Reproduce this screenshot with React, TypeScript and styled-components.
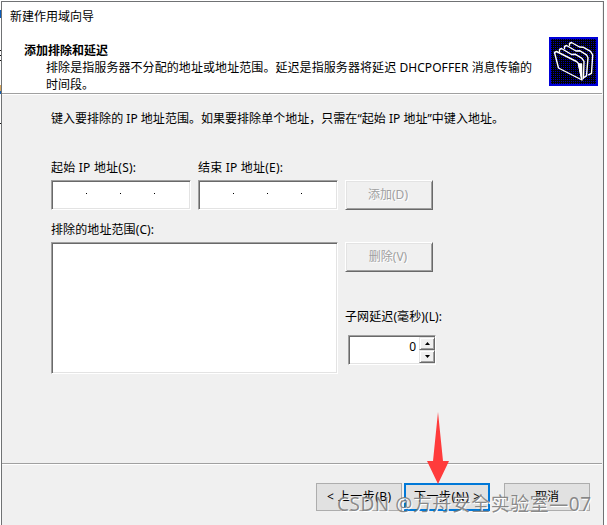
import React from "react";
import styled, { createGlobalStyle, css } from "styled-components";

const Global = createGlobalStyle`
  body { margin: 0; background: #fff; }
  * { box-sizing: border-box; }
  #root { height: 525px; overflow: hidden; }
`;

const Desktop = styled.main`
  position: relative;
  width: 607px;
  height: 525px;
  overflow: hidden;
  background: #fff;
  color: #000;
  font: 12px/17px "Noto Sans", "Noto Sans CJK SC", sans-serif;
  white-space: nowrap;
`;

const Behind = styled.svg`
  position: absolute;
  left: 0;
  top: 0;
`;

const Dialog = styled.section`
  width: 603px;
  height: 524px;
  margin: 1px 0 0 1px;
  border: 1px solid #707274;
  border-bottom: 0;
  background: #f0f0f0;
  display: flex;
  flex-direction: column;
`;

const Header = styled.header`
  flex: none;
  height: 92px;
  background: #fff;
  border-bottom: 1px solid #a0a0a0;
  display: flex;
  justify-content: space-between;
  padding: 6px 4px 0 8px;
  margin-right: 1px;
`;

const HeaderText = styled.div`
  display: flex;
  flex-direction: column;
`;

const Line = styled.div<{ $indent?: number; $top?: number }>`
  height: 17px;
  margin-left: ${(p) => p.$indent ?? 0}px;
  margin-top: ${(p) => p.$top ?? 0}px;
`;

const Fit = styled.svg`
  display: block;
  overflow: visible;
`;

const FolderIcon = styled.svg`
  margin-top: 29px;
  display: block;
`;

const Body = styled.div`
  height: 369px;
  border-top: 1px solid #fff;
  padding: 15px 0 0 49px;
`;

const Fields = styled.div`
  display: grid;
  grid-template-columns: 140px 140px 97px;
  column-gap: 7px;
  margin-top: 32px;
`;

const Label = styled.label`
  display: block;
  height: 21px;
`;

const sunken = css`
  background: #fff;
  border: 1px solid;
  border-color: #a0a0a0 #fff #fff #a0a0a0;
  box-shadow: inset 1px 1px #696969, inset -1px -1px #e3e3e3;
`;

const IpBox = styled.div`
  ${sunken}
  height: 30px;
  display: flex;
  gap: 33px;
  padding: 12px 0 0 34px;
`;

const Dot = styled.i`
  width: 1px;
  height: 1px;
  background: #000;
`;

const ButtonColumn = styled.div`
  display: flex;
  flex-direction: column;
  padding-top: 21px;
`;

const DisabledButton = styled.button`
  width: 88px;
  height: 30px;
  padding: 0 2px 1px 0;
  border: 1px solid;
  border-color: #fff #696969 #696969 #fff;
  box-shadow: inset 1px 1px #e3e3e3, inset -1px -1px #a0a0a0;
  background: #f0f0f0;
  color: #a0a0a0;
  text-shadow: 1px 1px #fff;
  font: inherit;
`;

const Lower = styled.div`
  display: grid;
  grid-template-columns: 287px 98px;
  column-gap: 7px;
  margin-top: 11px;
`;

const ListBox = styled.div`
  ${sunken}
  height: 132px;
`;

const DelayLabel = styled.div`
  margin-top: 36px;
  height: 25px;
`;

const Spinner = styled.div`
  ${sunken}
  width: 88px;
  height: 30px;
  margin: 2px 0 0 3px;
  padding: 1px 0 1px 1px;
  display: flex;
  justify-content: flex-end;
`;

const Value = styled.span`
  margin: 1px 3px 0 0;
`;

const Arrows = styled.div`
  width: 16px;
  display: grid;
  grid-template-rows: 13px 13px;
`;

const ArrowButton = styled.button`
  border: 1px solid;
  border-color: #e3e3e3 #696969 #696969 #e3e3e3;
  box-shadow: inset 1px 1px #fff, inset -1px -1px #a0a0a0;
  background: #f0f0f0;
  padding: 0;
  display: grid;
  place-items: center;
`;

const Footer = styled.footer`
  flex: 1;
  border-top: 1px solid #a0a0a0;
  margin-right: 1px;
  box-shadow: inset 0 1px #fff;
  padding: 19px 12px 0 0;
  display: flex;
  justify-content: flex-end;
`;

const NavButton = styled.button<{ $primary?: boolean; $gap?: number }>`
  width: 86px;
  height: 28px;
  padding: 0 0 1px;
  margin-left: ${(p) => p.$gap ?? 0}px;
  background: #e1e1e1;
  border: ${(p) => (p.$primary ? "2px solid #0078d7" : "1px solid #adadad")};
  font: inherit;
  color: #000;
  display: grid;
  place-items: center;
`;

const RedArrow = styled.svg`
  position: absolute;
  left: 427px;
  top: 411px;
`;

const Watermark = styled.div`
  position: absolute;
  left: 337px;
  top: 493px;
`;

type TextProps = { children: string; w: number; bold?: boolean };

/* A run of text held to a fixed advance width. */
function Run({ children, w, bold }: TextProps) {
  return (
    <Fit width={w} height={17}>
      <text x="0" y="13" fontSize={12} fontWeight={bold ? 700 : 400} textLength={w} fill="currentColor">
        {children}
      </text>
    </Fit>
  );
}

function IpField({ label, w }: { label: string; w: number }) {
  return (
    <div>
      <Label><Run w={w}>{label}</Run></Label>
      <IpBox><Dot /><Dot /><Dot /></IpBox>
    </div>
  );
}

export default function App() {
  return (
    <Desktop>
      <Global />
      <Behind width="1" height="125">
        <path d="M0 10h1v8H0z" fill="#0a5bb8" />
        <path d="M0 50h1v1H0zM0 55h1v1H0zM0 60h1v1H0zM0 123h1v1H0z" fill="#111" />
        <path d="M0 85h1v6H0z" fill="#d8a860" />
        <path d="M0 91h1v3H0z" fill="#1560b0" />
      </Behind>
      <Dialog>
        <Header>
          <HeaderText>
            <Line><Run w={84}>新建作用域向导</Run></Line>
            <Line $indent={14} $top={17}><Run w={84} bold>添加排除和延迟</Run></Line>
            <Line $indent={36}><Run w={486}>排除是指服务器不分配的地址或地址范围。延迟是指服务器将延迟 DHCPOFFER 消息传输的</Run></Line>
            <Line $indent={36}><Run w={48}>时间段。</Run></Line>
          </HeaderText>
          <FolderIcon width="49" height="49" viewBox="0 0 49 49">
            <defs>
              <pattern id="weave" width="2" height="2" patternUnits="userSpaceOnUse">
                <rect width="2" height="2" fill="#000" />
                <rect width="1" height="1" fill="#0000b0" />
              </pattern>
            </defs>
            <rect width="49" height="49" fill="url(#weave)" shapeRendering="crispEdges" />
            <rect x="1" y="1" width="47" height="47" fill="none" stroke="#0000d8" strokeWidth="2" />
            <g fill="none" stroke="#fff" strokeWidth="1.4" strokeLinejoin="round" strokeLinecap="round">
              <path d="M20.500 8.500v-2l2-1 8 4.500 4 .3 7 4 2.200 3.500-1.200 18.500-3 1.500" />
              <path d="M15.500 11.500v-2l2-1 9.500 5.500 4-.2 6.500 4 1.500 3-1.500 18-2.500 1.500" />
              <path d="M10.500 14.500v-2l2-1 10 6 4-.2 6.500 4 2 3-.5 17" />
              <path d="M5.500 15.500l2-1 20 10 2 2 3.500 16.500L9.500 31z" />
              <path d="M29.500 27h3l.3 15z" fill="#fff" />
            </g>
          </FolderIcon>
        </Header>
        <Body>
          <Run w={453}>键入要排除的 IP 地址范围。如果要排除单个地址，只需在“起始 IP 地址”中键入地址。</Run>
          <Fields>
            <IpField label="起始 IP 地址(S):" w={85} />
            <IpField label="结束 IP 地址(E):" w={85} />
            <ButtonColumn><DisabledButton disabled>添加(D)</DisabledButton></ButtonColumn>
          </Fields>
          <Lower>
            <div>
              <Label><Run w={103}>排除的地址范围(C):</Run></Label>
              <ListBox />
            </div>
            <ButtonColumn>
              <DisabledButton disabled>删除(V)</DisabledButton>
              <DelayLabel><Run w={97}>子网延迟(毫秒)(L):</Run></DelayLabel>
              <Spinner>
                <Value>0</Value>
                <Arrows>
                  <ArrowButton><svg width="5" height="3"><path d="M0 3L2.500 0L5 3z" /></svg></ArrowButton>
                  <ArrowButton><svg width="5" height="3"><path d="M0 0L2.500 3L5 0z" /></svg></ArrowButton>
                </Arrows>
              </Spinner>
            </ButtonColumn>
          </Lower>
        </Body>
        <Footer>
          <NavButton><Run w={64}>&lt; 上一步(B)</Run></NavButton>
          <NavButton $primary $gap={2}><Run w={66}>下一步(N) &gt;</Run></NavButton>
          <NavButton $gap={14}><Run w={24}>取消</Run></NavButton>
        </Footer>
      </Dialog>
      <RedArrow width="23" height="73"><path d="M11 1L16 50H22L11 73L0 50H6z" fill="#ff3b3b" /></RedArrow>
      <Watermark>
        <Fit width="255" height="24">
          <text x="1" y="19" fontSize="19" textLength="254" fill="#fff">CSDN @方舟安全实验室—07</text>
          <text x="0" y="18" fontSize="19" textLength="254" fill="#777" fillOpacity=".85">CSDN @方舟安全实验室—07</text>
        </Fit>
      </Watermark>
    </Desktop>
  );
}
